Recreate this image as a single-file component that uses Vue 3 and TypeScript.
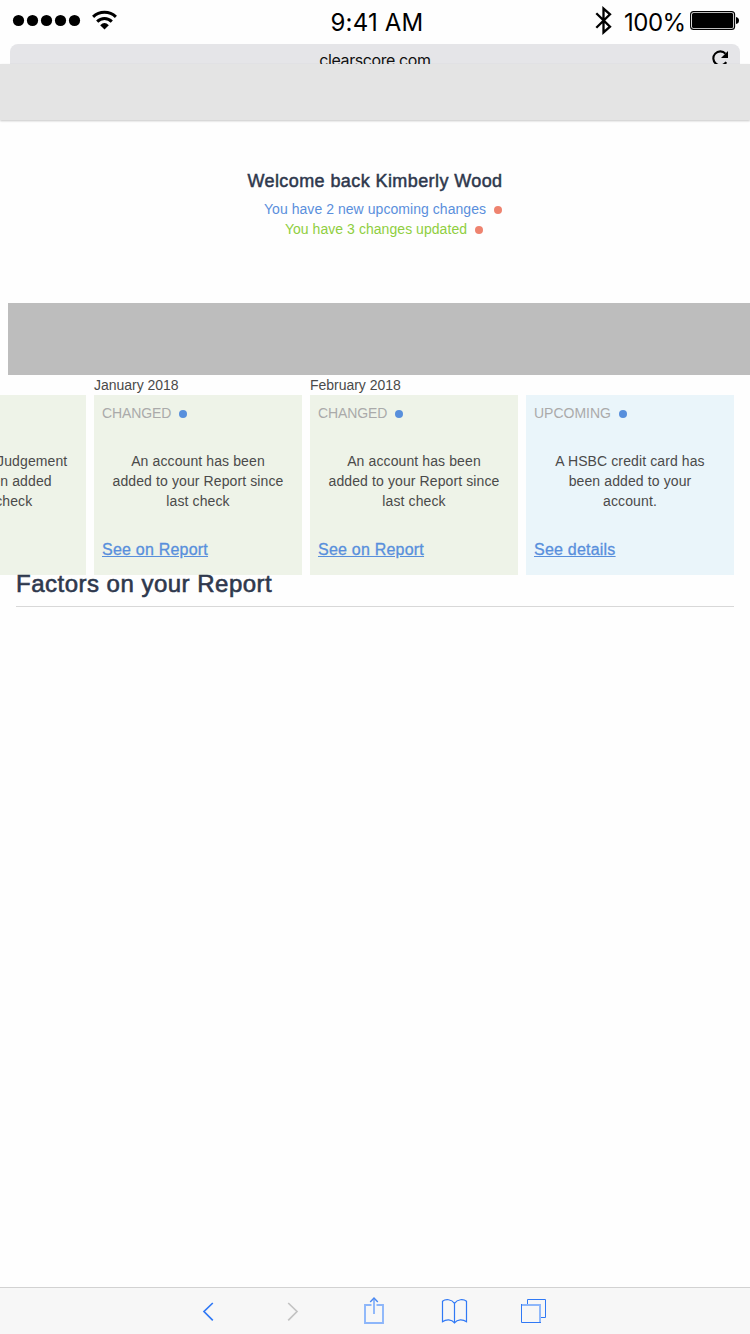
<script setup lang="ts">
interface Card {
  id: number
  month: string
  status: string
  lines: string[]
  action: string
  kind: 'changed' | 'upcoming'
}

const cards: Card[] = [
  { id: 1, month: '', status: 'CHANGED', lines: ['A County Court Judgement', '‘CCJ’ has been added', 'since last check'], action: 'See on Report', kind: 'changed' },
  { id: 2, month: 'January 2018', status: 'CHANGED', lines: ['An account has been', 'added to your Report since', 'last check'], action: 'See on Report', kind: 'changed' },
  { id: 3, month: 'February 2018', status: 'CHANGED', lines: ['An account has been', 'added to your Report since', 'last check'], action: 'See on Report', kind: 'changed' },
  { id: 4, month: '', status: 'UPCOMING', lines: ['A HSBC credit card has', 'been added to your', 'account.'], action: 'See details', kind: 'upcoming' },
]
</script>

<template>
  <div class="screen">
    <div class="status">
      <div class="left">
        <svg width="120" height="44" viewBox="0 0 120 44">
          <circle v-for="n in 5" :key="n" :cx="4.5 + n * 14" cy="20.5" r="5.6" />
          <g fill="none" stroke="#000" stroke-width="3">
            <path d="M93.1 16.8A16.4 16.4 0 0 1 115.9 16.8" />
            <path d="M97.2 21.6A10.2 10.2 0 0 1 111.8 21.6" />
          </g>
          <path d="M100.2 25.2Q104.5 20.6 108.8 25.2L104.5 29.4Z" />
        </svg>
      </div>
      <div class="time">9:41 AM</div>
      <div class="right">
        <svg width="18" height="44" viewBox="0 0 18 44">
          <path d="M1.300 13.200L15 26.600L8.500 32.400V8.600L15 14.400L1.300 27.800" fill="none" stroke="#000" stroke-width="2.300" />
        </svg>
        <span class="percent">100%</span>
        <svg width="50" height="44" viewBox="0 0 50 44">
          <rect x="0.6" y="11.6" width="44" height="17.8" rx="3" fill="none" stroke="#000" stroke-width="1.1" />
          <rect x="2" y="13" width="41.2" height="15" rx="1.5" />
          <path d="M46 17Q49 17.5 49 20.5T46 24Z" />
        </svg>
      </div>
    </div>
    <div class="address">
      <span class="domain">clearscore.com</span>
      <svg class="reload" width="18" height="20" viewBox="0 0 18 20">
        <path d="M14.5 9.6A7 7 0 1 0 15.2 18.2" fill="none" stroke="#000" stroke-width="2.1" />
        <path d="M17 7V14H10Z" />
      </svg>
    </div>
    <header class="header"></header>

    <section class="welcome">
      <h1>Welcome back Kimberly Wood</h1>
      <p class="blue"><span>You have 2 new upcoming changes</span><i class="dot"></i></p>
      <p class="green"><span>You have 3 changes updated</span><i class="dot"></i></p>
    </section>

    <div class="banner"></div>

    <section class="timeline">
      <div v-for="c in cards" :key="c.id" class="entry">
        <div class="month">{{ c.month }}</div>
        <article class="card" :class="c.kind">
          <div class="state"><span>{{ c.status }}</span><i class="dot"></i></div>
          <div class="message"><div v-for="l in c.lines" :key="l">{{ l }}</div></div>
          <a class="action">{{ c.action }}</a>
        </article>
      </div>
    </section>

    <h2><span>Factors on your Report</span></h2>

    <nav class="toolbar">
      <svg width="750" height="46" viewBox="0 1288 750 46" fill="none" stroke="#3079f5" stroke-width="1.4">
        <path d="M212.8 1303L204 1311.5L212.8 1320.3" stroke-width="1.7" />
        <path d="M288.2 1303L297 1311.5L288.2 1320.3" stroke="#c3c3c3" stroke-width="1.7" />
        <g stroke="#8db6fa" stroke-width="1.9">
          <path d="M371.5 1305H365V1323H383V1305H376.5" />
          <path d="M374 1298.5V1314" />
        </g>
        <path d="M370.2 1302L374 1298L377.8 1302" stroke="#4a88f0" />
        <path d="M454.5 1303.3C451.5 1299 445.5 1298.8 442.5 1301.3V1321.7C446 1319.2 451.5 1319 454.5 1322.8C457.5 1319 463 1319.2 466.5 1321.7V1301.3C463.5 1298.8 457.5 1299 454.5 1303.3V1323.5" stroke-width="1.2" />
        <path d="M527.5 1304V1299.5H545.5V1317.5H541" stroke-width="1" />
        <path d="M522 1305H540V1322" stroke="#8db6fa" stroke-width="1.9" />
        <path d="M521.5 1304V1322.5H541" stroke-width="1" />
      </svg>
    </nav>
  </div>
</template>

<style>
body {
  background: #fefefe;
}
</style>

<style scoped>
.screen {
  width: 750px;
  height: 1334px;
  overflow: hidden;
  display: flex;
  flex-direction: column;
  background: #fefefe;
  font-family: "Liberation Sans", Arial, sans-serif;
  font-size: 14px;
  line-height: 20px;
  color: #4a4a4a;
}
svg { display: block; }
h1, h2, p { margin: 0; }
.status {
  height: 44px;
  flex: none;
  display: grid;
  grid-template-columns: 250px 254px 246px;
  font-family: Inter, sans-serif;
  font-size: 24px;
  line-height: 46px;
  color: #000;
  white-space: nowrap;
}
.time { text-align: center; letter-spacing: 0.2px; }
.right { display: flex; padding-left: 91px; }
.percent { width: 61px; margin: 0 5px 0 11px; letter-spacing: -0.5px; }
.address {
  height: 20px;
  flex: none;
  margin: 0 10px;
  border-radius: 8px 8px 0 0;
  background: #e5e5e8;
  overflow: hidden;
  display: grid;
  grid-template-columns: 1fr auto 1fr;
}
.domain {
  grid-column: 2;
  font-family: Inter, sans-serif;
  font-size: 16px;
  letter-spacing: -0.42px;
  line-height: 32px;
  color: #111;
}
.reload { justify-self: end; margin-right: 11px; }
.header {
  height: 56px;
  flex: none;
  background: #e4e4e4;
  box-shadow: 0 1px 2px rgba(0, 0, 0, 0.22);
}
.welcome {
  height: 133px;
  flex: none;
  padding-top: 50px;
  text-align: center;
}
h1 {
  font-size: 18px;
  line-height: 22px;
  font-weight: 400;
  letter-spacing: 0.41px;
  color: #2e384d;
  -webkit-text-stroke: 0.5px #2e384d;
  margin-bottom: 7px;
}
.welcome p {
  display: flex;
  justify-content: center;
  align-items: center;
  gap: 8px;
  letter-spacing: 0.05px;
}
.welcome p.blue { padding-left: 16px; }
.welcome p.green { padding-left: 18px; }
.blue { color: #5a8fdc; }
.green { color: #8fce3f; }
.dot {
  width: 8px;
  height: 8px;
  border-radius: 50%;
  background: #ee836f;
  position: relative;
  top: 0.5px;
}
.banner {
  height: 72px;
  flex: none;
  margin-left: 8px;
  background: #bdbdbd;
}
.timeline {
  height: 200px;
  flex: none;
  display: flex;
  gap: 8px;
  margin-left: -122px;
}
.entry { width: 208px; flex: none; }
.month { height: 20px; letter-spacing: -0.03px; }
.card {
  box-sizing: border-box;
  height: 180px;
  padding: 8px;
  display: flex;
  flex-direction: column;
}
.card.changed { background: #eef3e8; }
.card.upcoming { background: #eaf5fa; }
.state {
  display: flex;
  align-items: center;
  gap: 8px;
  letter-spacing: -0.12px;
  color: #aaa;
}
.upcoming .state { letter-spacing: 0; }
.state .dot { background: #588fdc; }
.message {
  margin-top: 28px;
  text-align: center;
  white-space: nowrap;
  letter-spacing: 0.11px;
}
.action {
  align-self: flex-start;
  margin-top: 29px;
  font-size: 16px;
  letter-spacing: 0.22px;
  color: #588fdc;
  -webkit-text-stroke: 0.3px #588fdc;
  text-decoration: underline;
}
h2 {
  box-sizing: border-box;
  height: 32px;
  flex: none;
  margin: 0 16px;
  border-bottom: 1px solid #d8d8d8;
  font-size: 24px;
  line-height: 18px;
  font-weight: 400;
  letter-spacing: 0.49px;
  color: #2e384d;
  -webkit-text-stroke: 0.6px #2e384d;
}
.toolbar {
  height: 46px;
  flex: none;
  margin-top: auto;
  border-top: 1px solid #d2d2d2;
  background: #f7f7f7;
}
</style>
